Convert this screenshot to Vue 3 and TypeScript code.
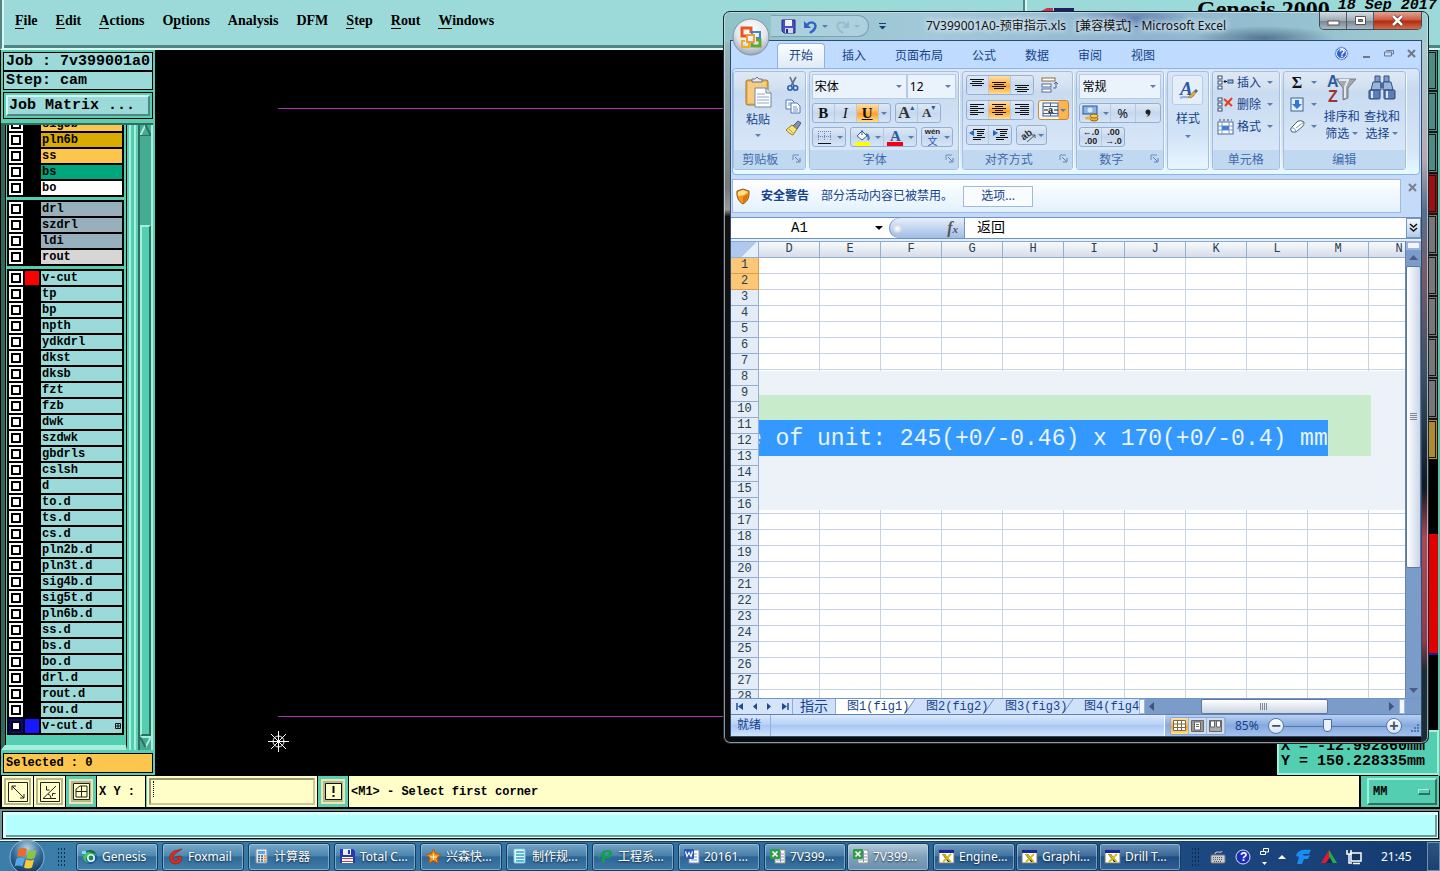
<script setup lang="ts">
import { ref } from 'vue'

interface Menu { pre: string; key: string; post: string }
interface Layer { name: string; tone: string; swatch?: string; active?: boolean }
interface Task { label: string; icon: string; lit?: boolean }

const menus: Menu[] = [
  { pre: '', key: 'F', post: 'ile' },
  { pre: '', key: 'E', post: 'dit' },
  { pre: '', key: 'A', post: 'ctions' },
  { pre: 'O', key: 'p', post: 'tions' },
  { pre: 'Analysis', key: '', post: '' },
  { pre: 'DFM', key: '', post: '' },
  { pre: '', key: 'S', post: 'tep' },
  { pre: '', key: 'R', post: 'out' },
  { pre: '', key: 'W', post: 'indows' },
]

const plain = (names: string): Layer[] => names.split(' ').map((name) => ({ name, tone: 'cyan' }))

const groups: Layer[][] = [
  [
    { name: 'sig5b', tone: 'amber' },
    { name: 'pln6b', tone: 'gold' },
    { name: 'ss', tone: 'amber' },
    { name: 'bs', tone: 'green' },
    { name: 'bo', tone: 'white' },
  ],
  [
    { name: 'drl', tone: 'slate' },
    { name: 'szdrl', tone: 'slate' },
    { name: 'ldi', tone: 'slate' },
    { name: 'rout', tone: 'silver' },
  ],
  [
    { name: 'v-cut', tone: 'cyan', swatch: 'red' },
    ...plain('tp bp npth ydkdrl dkst dksb fzt fzb dwk szdwk gbdrls cslsh d to.d ts.d cs.d pln2b.d pln3t.d sig4b.d sig5t.d pln6b.d ss.d bs.d bo.d drl.d rout.d rou.d'),
    { name: 'v-cut.d', tone: 'cyan', swatch: 'blue', active: true },
  ],
]

const sideTools = ['teal', 'teal', 'teal', 'red', 'grey', 'grey', 'grey', 'grey', 'grey', 'gold']

const ribbonTabs = ['开始', '插入', '页面布局', '公式', '数据', '审阅', '视图']
const columns = 'DEFGHIJKLMN'.split('')
const rowCount = 28
const sheets = ['图1(fig1)', '图2(fig2)', '图3(fig3)', '图4(fig4)']
const zoom = ref(50)
const units = ref('MM')
const fontName = ref('宋体')
const fontSize = ref('12')
const numberFormat = ref('常规')
const cellRef = ref('A1')
const formula = ref('返回')
const coords = ref('')

const taskGroups: Task[][] = [
  [{ label: 'Genesis', icon: 'genesis' }],
  [{ label: 'Foxmail', icon: 'foxmail' }],
  [{ label: '计算器', icon: 'calc' }],
  [{ label: 'Total C...', icon: 'floppy' }],
  [{ label: '兴森快...', icon: 'star' }],
  [{ label: '制作规...', icon: 'book' }],
  [{ label: '工程系...', icon: 'pflag' }],
  [{ label: '20161...', icon: 'word' }],
  [{ label: '7V399...', icon: 'excel' }, { label: '7V399...', icon: 'excel', lit: true }],
  [{ label: 'Engine...', icon: 'xwin' }, { label: 'Graphi...', icon: 'xwin' }, { label: 'Drill T...', icon: 'xwin' }],
]

const bars = (rows: [number, number, number][]): string =>
  rows.map(([x, y, w]) => `<rect x="${x}" y="${y}" width="${w}" height="1" fill="#111"/>`).join('')

const icons: Record<string, string> = {
  genesis: '<circle cx="9" cy="9" r="7" fill="#1d4f9c"/><path d="M2 8C5 2 13 2 16 8C12 5 8 6 6 9C4 12 6 14 9 15C4 15 2 12 2 8Z" fill="#3fc45c"/><circle cx="10" cy="10" r="4" fill="#e8f4ff"/><circle cx="10" cy="10" r="2.400" fill="#158a4a"/><path d="M1 3h4v3h-4z" fill="#7ce0f2"/><path d="M8 3l6 2" stroke="#173" stroke-width="2"/>',
  foxmail: '<path d="M15 1L7 3C1 6 1 15 8 16C14 16 16 11 14 8L8 9L12 11C11 14 6 13 6 10C6 6 10 5 15 1Z" fill="#d92f1f" stroke="#8e160d" stroke-width=".6"/>',
  calc: '<rect x="3" y="1" width="11" height="14" rx="1" fill="#dfe9f3" stroke="#7e96b0"/><rect x="5" y="3" width="7" height="3" fill="#5aa9e6"/><path d="M5 8h2M8 8h2M5 10.500h2M8 10.500h2M5 13h2M8 13h2" stroke="#456" stroke-width="1.400"/><path d="M11 8h2M11 10.500h2M11 13h2" stroke="#e08a2c" stroke-width="1.400"/>',
  floppy: '<path d="M1 1h13l2 2v12H1z" fill="#2438b8"/><rect x="4" y="1" width="8" height="6" fill="#e8eefc"/><rect x="9" y="2" width="2" height="4" fill="#2438b8"/><rect x="3" y="9" width="11" height="6" fill="#fff"/><path d="M3 10.500h11M3 13.500h11" stroke="#d63a3a"/>',
  star: '<path d="M8.500 1l2.200 4.900 5.300.5-4 3.600 1.200 5.300-4.700-2.800-4.700 2.800 1.200-5.300-4-3.600 5.300-.5z" fill="#f7941d" stroke="#b65a08"/><path d="M5 9h7M8.500 6v6" stroke="#fff3c0"/>',
  book: '<rect x="3" y="1" width="11" height="14" rx="1" fill="#eafaff" stroke="#7bc8e0"/><path d="M5 4h8M5 7h8M5 10h8M5 13h8" stroke="#2aa3c8" stroke-width="1.500"/>',
  pflag: '<path fill-rule="evenodd" d="M5 16L5 4C8 1 16 1 15 6C15 10 11 11 8 10V13ZM8 5v3c2 1 4-1 4-3s-3-1-4 0z" fill="#14a04a"/><path d="M1 9l4-5v3l-3 4z" fill="#2f8f70"/>',
  word: '<rect x="6" y="2" width="10" height="13" fill="#fff" stroke="#7a8cb8"/><path d="M8 6h6M8 9h6M8 12h6" stroke="#6d8ed0"/><rect x="1" y="1" width="10" height="10" rx="1" fill="#2b57b5"/><path d="M2.500 3.500l1.500 5 2-4 2 4 1.500-5" fill="none" stroke="#fff" stroke-width="1.200"/>',
  excel: '<rect x="6" y="2" width="10" height="13" fill="#fff" stroke="#8a9a8a"/><path d="M7 6h8M7 9h8M7 12h8M11.500 3v11" stroke="#8c8fb8"/><rect x="1" y="1" width="10" height="10" rx="1" fill="#2e9e44"/><path d="M3.500 3.500l5 5M8.500 3.500l-5 5" stroke="#fff" stroke-width="1.700"/>',
  xwin: '<rect x="1" y="2" width="15" height="13" fill="#fff" stroke="#777"/><rect x="1" y="2" width="15" height="3" fill="#122a9c"/><path d="M4 6h3l6 8h-3z" fill="#111"/><path d="M13 6L5 14M5 6l8 8" stroke="#d3bd10" stroke-width="1.800"/>',
  paste: '<rect x="2" y="4" width="22" height="25" rx="2" fill="#eab75f" stroke="#a0762c"/><rect x="4" y="6" width="18" height="21" fill="#f4cd83"/><path d="M8 6V3h3l2-2 2 2h3v3z" fill="#e6e9ee" stroke="#6d7580"/><path d="M11 12h11l5 5v14H11z" fill="#fff" stroke="#6e86ac"/><path d="M22 12v5h5" fill="#dbe6f5" stroke="#6e86ac"/><path d="M13 18h8M13 21h12M13 24h12M13 27h12" stroke="#8ea7cc"/>',
  cut: '<path d="M5 1l4 9M11 1L6 10" stroke="#5e6f8f" stroke-width="1.600"/><circle cx="5" cy="12" r="2.200" fill="none" stroke="#2c5fb3" stroke-width="1.600"/><circle cx="10.500" cy="12" r="2.200" fill="none" stroke="#2c5fb3" stroke-width="1.600"/>',
  copy: '<path d="M1 2h6l2 2v7H1z" fill="#fff" stroke="#4f76b6"/><path d="M6 5h6l3 3v7H6z" fill="#fff" stroke="#4f76b6"/><path d="M3 5h4M3 7h3M8 9h4M8 11h5M8 13h5" stroke="#6f92c8"/>',
  brush: '<path d="M13 1l3 2-4 6-4-3z" fill="#8793ab" stroke="#4b5870"/><path d="M7 5l5 4-4 6c-3-1-5-3-7-5z" fill="#f9e27a" stroke="#9a7a1e"/><path d="M4 9l4 4" stroke="#c9a438"/>',
  grid: '<path d="M2.500 2v10M8.500 2v10M14.500 2v10M2 2.500h13M2 7.500h13" stroke="#7588a8" stroke-dasharray="1 1"/><path d="M2 14.500h13" stroke="#111"/>',
  bucket: '<path d="M3 7l5-5 5 5-5 4z" fill="#f4f8ff" stroke="#3d5d94"/><path d="M8 1v5" stroke="#3d5d94"/><path d="M12 5c3 1 3 4 2 6" stroke="#3a74c4" stroke-width="2" fill="none"/><rect x="1" y="13" width="15" height="4" fill="#ff0"/>',
  fontcolor: '<text x="3" y="12" font-family="Liberation Serif" font-weight="bold" font-size="15" fill="#2c5a9e">A</text><rect x="0" y="13" width="16" height="4" fill="#f00010"/>',
  alignTop: bars([[1, 2, 14], [3, 4, 10], [1, 6, 14], [3, 8, 10]]),
  alignMid: bars([[1, 5, 14], [3, 7, 10], [1, 9, 14], [3, 11, 10]]),
  alignBot: bars([[1, 8, 14], [3, 10, 10], [1, 12, 14], [3, 14, 10]]),
  left: bars([[1, 2, 14], [1, 4, 8], [1, 6, 14], [1, 8, 8], [1, 10, 14], [1, 12, 8]]),
  center: bars([[1, 2, 14], [4, 4, 8], [1, 6, 14], [4, 8, 8], [1, 10, 14], [4, 12, 8]]),
  right: bars([[1, 2, 14], [6, 4, 9], [1, 6, 14], [6, 8, 9], [1, 10, 14], [6, 12, 9]]),
  outdent: bars([[4, 2, 12], [8, 4, 7], [8, 6, 7], [8, 8, 5], [4, 10, 12], [4, 12, 8]]) + '<path d="M5 3v6L0 6z" fill="#2b63b8"/>',
  indent: bars([[4, 2, 12], [8, 4, 7], [8, 6, 7], [8, 8, 5], [4, 10, 12], [4, 12, 8]]) + '<path d="M1 3v6l5-3z" fill="#2b63b8"/>',
  wrap: '<rect x="1" y="1" width="13" height="3" fill="#fff" stroke="#8a6d3a"/><rect x="1" y="7" width="9" height="3" fill="#fff" stroke="#556d94"/><rect x="1" y="12" width="9" height="3" fill="#fff" stroke="#556d94"/><path d="M12 11h3V6M13 7l2-2 2 2" stroke="#4066a0" fill="none"/>',
  merge: '<rect x="1" y="1" width="15" height="13" fill="#f4f8fd" stroke="#3d5f94"/><path d="M1 4.500h15M1 11.500h15M8.500 1v3M8.500 12v2" stroke="#3d5f94"/><text x="6" y="11" font-family="Liberation Sans" font-weight="bold" font-size="9" fill="#111">a</text><path d="M2 8h4M12 8h4" stroke="#111"/>',
  orient: '<text x="1" y="12" transform="rotate(-35 5 9)" font-family="Liberation Sans" font-size="10" font-weight="bold" fill="#333">ab</text><path d="M7 15L15 8M12 8h3v3" stroke="#555" fill="none"/>',
  money: '<rect x="1" y="1" width="14" height="8" fill="#8ab3e3" stroke="#2a5694"/><circle cx="8" cy="5" r="2.500" fill="#d7e8fb"/><ellipse cx="12" cy="14" rx="4" ry="2" fill="#e9b23a" stroke="#96660c"/><ellipse cx="12" cy="11" rx="4" ry="2" fill="#f7cf5e" stroke="#96660c"/><ellipse cx="6" cy="13" rx="3" ry="1.500" fill="#e9b23a"/>',
  styleA: '<text x="4" y="17" font-family="Liberation Serif" font-style="italic" font-weight="bold" font-size="19" fill="#2c5a9e">A</text><path d="M4 20C10 17 12 22 18 17" stroke="#8fb0df" stroke-width="2" fill="none"/><path d="M12 19l6-6 2 2-5 5z" fill="#e5a83c" stroke="#8b6420" stroke-width=".5"/><path d="M18 13l2-2 2 2-2 2z" fill="#55677f"/>',
  insert: '<rect x="1" y="1" width="4" height="3" fill="#fff" stroke="#334d78"/><rect x="1" y="6" width="4" height="3" fill="#fff" stroke="#334d78"/><rect x="1" y="11" width="4" height="3" fill="#fff" stroke="#334d78"/><rect x="11" y="5" width="5" height="3" fill="#9cc0ee" stroke="#334d78"/><path d="M7 6.500h3M8.500 5L7 6.500 8.500 8" stroke="#111" fill="none"/>',
  remove: '<rect x="1" y="1" width="4" height="3" fill="#fff" stroke="#334d78"/><rect x="1" y="6" width="4" height="3" fill="#fff" stroke="#334d78"/><rect x="1" y="11" width="4" height="3" fill="#fff" stroke="#334d78"/><path d="M7 2l8 7M15 1L8 9" stroke="#ec3b24" stroke-width="2"/>',
  format: '<rect x="1" y="3" width="15" height="12" fill="#fff" stroke="#4b6a9c"/><path d="M1 7h15M1 11h15M5 3v12M12 3v12" stroke="#7a97c4"/><rect x="5" y="7" width="7" height="4" fill="#3f7ee0"/><path d="M2 1h13" stroke="#334d78" stroke-dasharray="2 2"/>',
  fill: '<rect x="1" y="1" width="12" height="13" fill="#e5effc" stroke="#39629f"/><path d="M5 3h4v4h3l-5 5-5-5h3z" fill="#2f76e0"/>',
  erase: '<path d="M1 9L8 2q3-1 6 1q0 3-1 4L6 13H2Q0 11 1 9z" fill="#fff" stroke="#4d607f"/><path d="M1 9q4-1 5 4M6 9l8-6" stroke="#8494ac" fill="none"/>',
  sort: '<text x="0" y="13" font-family="Liberation Sans" font-size="16" font-weight="bold" fill="#2d5c9e">A</text><text x="1" y="28" font-family="Liberation Sans" font-size="16" font-weight="bold" fill="#9c3434">Z</text><path d="M9 5h20l-8 9v10l-5 2V14z" fill="#a2a6ad" stroke="#777d86"/><path d="M12 6h9l-3 7v11" stroke="#e4e7eb" stroke-width="2" fill="none"/>',
  find: '<path d="M7 2h5v6H7zM16 2h5v6h-5z" fill="#7f9cc8" stroke="#33507f"/><path d="M5 8h8v8H3zM15 8h8l2 8H15z" fill="#9ab4dc" stroke="#33507f"/><rect x="12" y="9" width="4" height="5" fill="#4a689c"/><rect x="1" y="16" width="11" height="9" rx="1" fill="#5b7db8" stroke="#2c4775"/><rect x="16" y="16" width="11" height="9" rx="1" fill="#5b7db8" stroke="#2c4775"/><path d="M4 17v7M19 17v7" stroke="#dce8fa" stroke-width="2"/>',
  launcher: '<path d="M1 6V1h6" stroke="#6a8dbc" fill="none"/><path d="M3 3l4 4M8 4v4H4" stroke="#5d7fae" fill="none"/>',
  save: '<path d="M1 1h13v13H3l-2-2z" fill="#4b4fc4" stroke="#26297f"/><rect x="4" y="1" width="7" height="6" fill="#eef2fb"/><rect x="4" y="9" width="8" height="5" fill="#cfd6ee"/><rect x="5" y="10" width="2" height="4" fill="#26297f"/>',
  undo: '<path d="M4 6C8 1 14 4 12 9C11 12 8 13 7 14" stroke="#2f62c4" stroke-width="2.400" fill="none"/><path d="M1 2v7h7z" fill="#2f62c4"/>',
  redo: '<path d="M11 6C7 1 1 4 3 9C4 12 7 13 8 14" stroke="#9db9cf" stroke-width="2" fill="none"/><path d="M14 2v7H7z" fill="#9db9cf"/>',
}
</script>

<template>
  <div class="page">
    <header class="menubar">
      <nav class="menus">
        <button v-for="m in menus" :key="m.pre + m.key + m.post" class="menu" type="button">{{ m.pre }}<u v-if="m.key">{{ m.key }}</u>{{ m.post }}</button>
      </nav>
      <div class="brand">
        <svg class="mark" width="36" height="12" viewBox="0 0 36 12"><path d="M0 12L8 8h6v4z" fill="#d0304a" /><rect x="15" y="8" width="20" height="4" fill="#1b1f66" /></svg>
        <strong class="product">Genesis 2000</strong>
        <em class="date">18 Sep 2017</em>
      </div>
    </header>

    <main class="desk">
      <aside class="panel">
        <div class="field">Job : 7v399001a0</div>
        <div class="field">Step: cam</div>
        <div class="matrix"><button type="button">Job Matrix ...</button></div>
        <div class="lists">
          <div class="layers">
            <ul v-for="(g, gi) in groups" :key="gi" class="group">
              <li v-for="l in g" :key="l.name" class="layer">
                <input type="checkbox" :class="{ current: l.active }" :aria-label="'Display ' + l.name">
                <span class="swatch" :class="l.swatch"></span>
                <button type="button" class="name" :class="l.tone">{{ l.name }}<svg v-if="l.active" width="6" height="6" viewBox="0 0 6 6"><path d="M.5 .5h5v5h-5zM3 0v6M0 3h6" fill="none" stroke="#111" /></svg></button>
              </li>
            </ul>
          </div>
          <div class="ridge"></div>
          <div class="vbar">
            <svg width="11" height="11" viewBox="0 0 11 11"><path d="M5.500 0L0 11" stroke="#a4f0dc" stroke-width="2" /><path d="M5.500 0L11 11H0" fill="none" stroke="#2f6e61" stroke-width="2" /></svg>
            <div class="gap"></div>
            <div class="grip"></div>
            <svg width="11" height="14" viewBox="0 0 11 14"><path d="M0 1H11L5.500 11" fill="none" stroke="#a4f0dc" stroke-width="2" /><path d="M0 1L5.500 11" stroke="#2f6e61" stroke-width="2" /></svg>
          </div>
        </div>
        <div class="selected">Selected : 0</div>
      </aside>

      <div class="canvas">
        <svg class="drawing" width="100%" height="100%">
          <path d="M123 58.500H1100M123 666.500H1100" stroke="#ac38b0" />
          <g stroke="#fff" fill="none"><circle cx="123.500" cy="691.500" r="5.500" /><path d="M113 691.500h21M123.500 681v21M116 684l15 15M131 684l-15 15" /></g>
        </svg>
      </div>
      <div class="sidetools">
        <button v-for="(t, i) in sideTools" :key="i" type="button" :class="t" :aria-label="'Tool ' + (i + 1)"></button>
        <div class="void"></div>
        <div class="alert"></div>
      </div>
      <div class="readout"><div>X = -12.992860mm</div><div>Y = 150.228335mm</div></div>
    </main>

    <section class="command">
      <button type="button" class="tool" aria-label="Snap to line"><svg width="20" height="20" viewBox="0 0 20 20"><path d="M.5 .5h19v19H.5zM4 4l12 12M4 8V4h4M16 12v4h-4" fill="none" stroke="#222" /></svg></button>
      <button type="button" class="tool" aria-label="Angle"><svg width="20" height="20" viewBox="0 0 20 20"><path d="M.5 .5h19v19H.5zM3 16.500L16 4M3 16.500h13M6.500 4v4h3M8 12q3 1 3 4M12.500 14v-2.500h3" fill="none" stroke="#222" /></svg></button>
      <button type="button" class="tool on" aria-label="Grid"><svg width="17" height="17" viewBox="0 0 17 17"><path d="M.5 .5h16v16H.5zM3 14V6l4-3h7v11zM8.500 3v11M3 8.500h11" fill="none" stroke="#222" /></svg></button>
      <label class="xy" for="xy">X Y :</label>
      <div class="entry"><input id="xy" v-model="coords" type="text"><i class="caret"></i></div>
      <button type="button" class="tool on" aria-label="Attention"><svg width="17" height="17" viewBox="0 0 17 17"><path d="M.5 .5h16v16H.5z" fill="none" stroke="#111" /><path d="M8.500 3v7M8.500 12v2" stroke="#111" stroke-width="2" /></svg></button>
      <p class="message">&lt;M1&gt; - Select first corner</p>
      <div class="units"><select v-model="units" aria-label="Units"><option>MM</option><option>INCH</option></select><i></i></div>
    </section>
    <div class="status"><div></div></div>

    <footer class="taskbar">
      <button type="button" class="start" aria-label="Start">
        <svg width="38" height="32" viewBox="0 0 38 32">
          <defs><radialGradient id="orb" cx=".5" cy=".25" r=".8"><stop offset="0" stop-color="#b4d3e3" /><stop offset=".5" stop-color="#366f9c" /><stop offset="1" stop-color="#0d2c50" /></radialGradient></defs>
          <circle cx="19" cy="17" r="17" fill="url(#orb)" stroke="#8ab9d4" />
          <path d="M11 9q4-2 8 0l-2 8q-4-2-8 0z" fill="#ec6a2c" /><path d="M20.500 10q4 2 8 0l-2 8q-4 2-8 0z" fill="#8cc63e" /><path d="M8.500 18.500q4-2 8 0l-2 8q-4-2-8 0z" fill="#54a8e4" /><path d="M18 19.500q4 2 8 0l-2 8q-4 2-8 0z" fill="#fcca38" />
        </svg>
      </button>
      <span class="dots"></span>
      <div class="tasks">
        <div v-for="(g, gi) in taskGroups" :key="gi" class="taskgroup">
          <button v-for="(t, ti) in g" :key="ti" type="button" class="task" :class="{ lit: t.lit }"><svg width="17" height="17" viewBox="0 0 17 17" v-html="icons[t.icon]"></svg><span>{{ t.label }}</span></button>
        </div>
      </div>
      <div class="tray">
        <span class="dots"></span>
        <svg width="16" height="14" viewBox="0 0 16 14"><path d="M5 4C5 0 12 4 12 1" stroke="#ddd" fill="none" /><rect x="1" y="5" width="14" height="8" rx="1" fill="#c8ccd0" stroke="#777" /><path d="M3 7.500h10M3 9.500h10M4 11.500h8" stroke="#555" stroke-dasharray="1 1" /></svg>
        <svg width="16" height="16" viewBox="0 0 16 16"><circle cx="8" cy="8" r="7" fill="#1a2cb8" stroke="#dde" /><text x="5" y="12" font-family="Liberation Sans" font-weight="bold" font-size="12" fill="#fff">?</text></svg>
        <svg width="9" height="18" viewBox="0 0 9 18"><path d="M3.500 3V.500h5V4H6M.5 3.500h5v3h-5z" fill="none" stroke="#fff" /><path d="M2 14h5l-2.500 3z" fill="#fff" /></svg>
        <svg width="8" height="5" viewBox="0 0 8 5"><path d="M0 5l4-4 4 4z" fill="#fff" /></svg>
        <svg width="17" height="16" viewBox="0 0 17 16"><path d="M1 7C2 1 8 0 16 1L14 5H9C7 5 8 8 15 6L13 10H9L7 15H2L4 8z" fill="#1c8cf0" /></svg>
        <svg width="16" height="15" viewBox="0 0 16 15"><path d="M8 1L0 14h5l4-6z" fill="#e8182c" /><path d="M8 1l8 13h-4L8 7z" fill="#20b048" /><path d="M5 14l4-5 2 5z" fill="#0c2c54" /></svg>
        <svg width="16" height="16" viewBox="0 0 16 16"><rect x="5" y="4" width="10" height="8" fill="#17365f" stroke="#fff" stroke-width="1.500" /><path d="M7 14.500h7M1 1v4h4V1M3 5v9h3" stroke="#fff" stroke-width="1.500" fill="none" /></svg>
        <time>21:45</time>
        <button type="button" class="peek" aria-label="Show desktop"></button>
      </div>
    </footer>

    <section class="excel">
      <div class="titlebar">
        <div class="quick">
          <button type="button" aria-label="Save"><svg width="15" height="15" viewBox="0 0 15 15" v-html="icons.save"></svg></button>
          <button type="button" aria-label="Undo"><svg width="15" height="15" viewBox="0 0 15 15" v-html="icons.undo"></svg><i class="car"></i></button>
          <button type="button" aria-label="Redo"><svg width="15" height="15" viewBox="0 0 15 15" v-html="icons.redo"></svg><i class="car pale"></i></button>
        </div>
        <svg class="more" width="7" height="7" viewBox="0 0 7 7"><path d="M0 .5h7" stroke="#1f3c70" /><path d="M0 3h7L3.500 6.500z" fill="#1f3c70" /></svg>
        <h1>7V399001A0-预审指示.xls&nbsp;&nbsp; [兼容模式] - Microsoft Excel</h1>
        <div class="winbtns">
          <button type="button" aria-label="Minimize"><svg width="13" height="12" viewBox="0 0 13 12"><rect x="1" y="6" width="11" height="4" fill="#fff" stroke="#555" /></svg></button>
          <button type="button" aria-label="Maximize"><svg width="13" height="12" viewBox="0 0 13 12"><path d="M1.500 1.500h10v8h-10z" fill="#fff" stroke="#555" /><path d="M4.500 4.500h4v2h-4z" fill="#889" stroke="#555" /></svg></button>
          <button type="button" class="close" aria-label="Close"><svg width="13" height="12" viewBox="0 0 13 12"><path d="M2 1l9 9M11 1l-9 9" stroke="#5a2a26" stroke-width="4" /><path d="M2 1l9 9M11 1l-9 9" stroke="#fff" stroke-width="2.500" /></svg></button>
        </div>
      </div>
      <button type="button" class="office" aria-label="Office">
        <svg width="38" height="38" viewBox="0 0 38 38">
          <defs><radialGradient id="pearl" cx=".5" cy=".3" r=".7"><stop offset="0" stop-color="#fff" /><stop offset=".6" stop-color="#e3e6ec" /><stop offset="1" stop-color="#9aa8b8" /></radialGradient></defs>
          <circle cx="19" cy="19" r="18" fill="url(#pearl)" stroke="#7f93a4" />
          <g fill="none"><path d="M14 18h-4v-8h9v5" stroke="#e8561c" stroke-width="3" /><path d="M20 17v-3h8v6h-4" stroke="#3d86d0" stroke-width="2" /><path d="M17 23v6h-7v-6h3" stroke="#f4ae1c" stroke-width="2" /><path d="M24 22h4v6h-8v-4" stroke="#63a82c" stroke-width="3" /><path d="M15 17h7v7h-7z" stroke="#f09a3c" stroke-width="2" /></g>
        </svg>
      </button>
      <div class="client">
        <div class="tabrow">
          <button v-for="(t, i) in ribbonTabs" :key="t" type="button" class="rtab" :class="{ on: i === 0 }">{{ t }}</button>
          <div class="mdi">
            <svg width="15" height="15" viewBox="0 0 15 15"><circle cx="7.500" cy="7.500" r="6.500" fill="#2d62d0" stroke="#9cb7e4" /><circle cx="7.500" cy="7.500" r="5" fill="none" stroke="#fff" /><text x="5" y="11" font-family="Liberation Sans" font-size="10" font-weight="bold" fill="#fff">?</text></svg>
            <svg width="9" height="9" viewBox="0 0 9 9"><path d="M1 8h7" stroke="#6e7886" stroke-width="2" /></svg>
            <svg width="10" height="9" viewBox="0 0 10 9"><path d="M2.500 2V1.500h7V5H8M.5 3h7v4h-7z" fill="none" stroke="#6e7886" /></svg>
            <svg width="9" height="9" viewBox="0 0 9 9"><path d="M1 1l7 7M8 1L1 8" stroke="#6e7886" stroke-width="2" /></svg>
          </div>
        </div>

        <div class="ribbon">
          <div class="rg clip">
            <div class="body">
              <button type="button" class="big"><svg width="29" height="33" viewBox="0 0 29 33" v-html="icons.paste"></svg><span>粘贴</span><i class="car"></i></button>
              <div class="stack">
                <button v-for="n in ['cut', 'copy', 'brush']" :key="n" type="button" :aria-label="n"><svg width="16" height="16" viewBox="0 0 16 16" v-html="icons[n]"></svg></button>
              </div>
            </div>
            <div class="cap">剪贴板<svg width="9" height="9" viewBox="0 0 9 9" v-html="icons.launcher"></svg></div>
          </div>
          <div class="rg font">
            <div class="body rows">
              <div class="line tall">
                <label class="combo wide"><select v-model="fontName" aria-label="Font"><option>宋体</option></select><i class="car"></i></label>
                <label class="combo size"><select v-model="fontSize" aria-label="Font size"><option>12</option></select><i class="car"></i></label>
              </div>
              <div class="line">
                <div class="btns"><button type="button" class="serif"><b>B</b></button><button type="button" class="serif"><i class="ital">I</i></button><button type="button" class="serif hot"><b><u>U</u></b></button><button type="button" class="thin" aria-label="Underline style"><i class="car"></i></button></div>
                <div class="btns"><button type="button" class="serif grow">A<sup>▴</sup></button><button type="button" class="serif shrink">A<sup>▾</sup></button></div>
              </div>
              <div class="line">
                <div class="btns"><button type="button" class="drop" aria-label="Borders"><svg width="17" height="17" viewBox="0 0 17 17" v-html="icons.grid"></svg><i class="car"></i></button></div>
                <div class="btns"><button type="button" class="drop" aria-label="Fill colour"><svg width="17" height="17" viewBox="0 0 17 17" v-html="icons.bucket"></svg><i class="car"></i></button><button type="button" class="drop" aria-label="Font colour"><svg width="17" height="17" viewBox="0 0 17 17" v-html="icons.fontcolor"></svg><i class="car"></i></button></div>
                <div class="btns"><button type="button" class="drop"><span class="wen"><small>wén</small><span>文</span></span><i class="car"></i></button></div>
              </div>
            </div>
            <div class="cap">字体<svg width="9" height="9" viewBox="0 0 9 9" v-html="icons.launcher"></svg></div>
          </div>
          <div class="rg align">
            <div class="body rows even">
              <div class="line">
                <div class="btns"><button v-for="n in ['alignTop', 'alignMid', 'alignBot']" :key="n" type="button" :class="{ hot: n === 'alignMid' }" :aria-label="n"><svg width="16" height="16" viewBox="0 0 16 16" v-html="icons[n]"></svg></button></div>
                <button type="button" class="bare" aria-label="Wrap text"><svg width="17" height="16" viewBox="0 0 17 16" v-html="icons.wrap"></svg></button>
              </div>
              <div class="line">
                <div class="btns"><button v-for="n in ['left', 'center', 'right']" :key="n" type="button" :class="{ hot: n === 'center' }" :aria-label="n"><svg width="16" height="16" viewBox="0 0 16 16" v-html="icons[n]"></svg></button></div>
                <div class="btns gold"><button type="button" class="drop tight" aria-label="Merge"><svg width="17" height="16" viewBox="0 0 17 16" v-html="icons.merge"></svg><i class="car"></i></button></div>
              </div>
              <div class="line">
                <div class="btns"><button v-for="n in ['outdent', 'indent']" :key="n" type="button" :aria-label="n"><svg width="16" height="16" viewBox="0 0 16 16" v-html="icons[n]"></svg></button></div>
                <div class="btns"><button type="button" class="drop tight" aria-label="Orientation"><svg width="17" height="16" viewBox="0 0 17 16" v-html="icons.orient"></svg><i class="car"></i></button></div>
              </div>
            </div>
            <div class="cap">对齐方式<svg width="9" height="9" viewBox="0 0 9 9" v-html="icons.launcher"></svg></div>
          </div>
          <div class="rg num">
            <div class="body rows">
              <div class="line tall"><label class="combo full"><select v-model="numberFormat" aria-label="Number format"><option>常规</option></select><i class="car"></i></label></div>
              <div class="line"><div class="btns full"><button type="button" class="drop" aria-label="Currency"><svg width="17" height="17" viewBox="0 0 17 17" v-html="icons.money"></svg><i class="car"></i></button><button type="button" class="glyph">%</button><button type="button" class="glyph comma" aria-label="Comma style"><svg width="6" height="9" viewBox="0 0 6 9"><circle cx="3" cy="3" r="2.500" fill="#222" /><path d="M5 3q1 4-4 5q3-2 2-4z" fill="#222" /></svg></button></div></div>
              <div class="line"><div class="btns"><button type="button" class="dec"><span>←.0</span><span>.00</span></button><button type="button" class="dec"><span>.00</span><span>→.0</span></button></div></div>
            </div>
            <div class="cap">数字<svg width="9" height="9" viewBox="0 0 9 9" v-html="icons.launcher"></svg></div>
          </div>
          <button type="button" class="rg style"><span class="tile"><svg width="24" height="24" viewBox="0 0 24 24" v-html="icons.styleA"></svg></span><span>样式</span><i class="car"></i></button>
          <div class="rg cell">
            <div class="body list">
              <button type="button"><svg width="17" height="16" viewBox="0 0 17 16" v-html="icons.insert"></svg>插入<i class="car"></i></button>
              <button type="button"><svg width="17" height="16" viewBox="0 0 17 16" v-html="icons.remove"></svg>删除<i class="car"></i></button>
              <button type="button"><svg width="17" height="16" viewBox="0 0 17 16" v-html="icons.format"></svg>格式<i class="car"></i></button>
            </div>
            <div class="cap">单元格</div>
          </div>
          <div class="rg edit">
            <div class="body">
              <div class="list">
                <button type="button"><span class="sigma">Σ</span><i class="car"></i></button>
                <button type="button" aria-label="Fill"><svg width="15" height="15" viewBox="0 0 15 15" v-html="icons.fill"></svg><i class="car"></i></button>
                <button type="button" aria-label="Clear"><svg width="15" height="15" viewBox="0 0 15 15" v-html="icons.erase"></svg><i class="car"></i></button>
              </div>
              <button type="button" class="big"><svg width="30" height="30" viewBox="0 0 30 30" v-html="icons.sort"></svg><span>排序和</span><span>筛选<i class="car"></i></span></button>
              <button type="button" class="big"><svg width="28" height="30" viewBox="0 0 28 30" v-html="icons.find"></svg><span>查找和</span><span>选择<i class="car"></i></span></button>
            </div>
            <div class="cap">编辑</div>
          </div>
        </div>

        <div class="warnrow">
          <div class="warn">
            <svg width="14" height="17" viewBox="0 0 14 17"><path d="M7 1L13 3C13.500 9 12 13 7 16C2 13 .5 9 1 3Z" fill="#f79a1c" stroke="#8a5a28" /><path d="M7 2L12 4L8 7L2 8V4Z" fill="#fde08a" /><path d="M7 9l5-3c0 4-2 7-5 9z" fill="#e2700e" /></svg>
            <strong>安全警告</strong><span>部分活动内容已被禁用。</span><button type="button">选项...</button>
          </div>
          <svg class="x" width="9" height="9" viewBox="0 0 9 9"><path d="M1 1l7 7M8 1L1 8" stroke="#7a7f88" stroke-width="2" /></svg>
        </div>

        <div class="formula">
          <input v-model="cellRef" class="ref" aria-label="Name box" type="text"><i class="car black"></i>
          <div class="fx"><i class="knob"></i><span>f<small>x</small></span></div>
          <input v-model="formula" class="fin" aria-label="Formula" type="text">
          <button type="button" aria-label="Expand"><svg width="9" height="10" viewBox="0 0 9 10"><path d="M1 1l3.500 3L8 1M1 5l3.500 3L8 5" fill="none" stroke="#111" stroke-width="1.500" /></svg></button>
        </div>

        <div class="sheet">
          <div class="cells">
            <table>
              <thead><tr><th class="corner"></th><th v-for="c in columns" :key="c">{{ c }}</th></tr></thead>
              <tbody><tr v-for="r in rowCount" :key="r"><th :class="{ sel: r < 3 }">{{ r }}</th><td v-for="c in columns" :key="c"></td></tr></tbody>
            </table>
            <div class="picture"><div class="box"><span>e of unit: 245(+0/-0.46) x 170(+0/-0.4) mm</span></div></div>
          </div>
          <div class="scroll">
            <i class="split"></i>
            <svg width="15" height="16" viewBox="0 0 15 16"><path d="M3 10l4.500-5 4.500 5z" fill="#4a5d84" /></svg>
            <div class="thumb"><i></i></div>
            <svg class="end" width="15" height="16" viewBox="0 0 15 16"><path d="M3 6l4.500 5L12 6z" fill="#4a5d84" /></svg>
          </div>
        </div>

        <div class="sheettabs">
          <div class="nav">
            <svg width="62" height="16" viewBox="0 0 62 16"><path d="M6 4v7M57 4v7" stroke="#1f4a8e" stroke-width="1.500" /><path d="M12 4v7L7 7.500zM26 4v7l-4-3.500zM36 4v7l4-3.500zM51 4v7l5-3.500z" fill="#1f4a8e" /></svg>
          </div>
          <button type="button" class="stab first">指示</button>
          <div class="strip">
            <button v-for="(s, i) in sheets" :key="s" type="button" class="stab" :class="{ on: i === 0 }"><svg width="12" height="16" viewBox="0 0 12 16"><path d="M0 0H12L3 13Q1 16 0 16Z" :fill="i === 0 ? '#fff' : '#cfe0fa'" /><path d="M12 0L3 13L0 16" fill="none" stroke="#6c90c8" /></svg><span>{{ s }}</span></button>
          </div>
          <i class="vsplit"></i>
          <div class="hscroll">
            <svg width="15" height="16" viewBox="0 0 15 16"><path d="M9 3v9L4 7.500z" fill="#3f547e" /></svg>
            <div class="hthumb"><i></i></div>
            <svg class="end" width="15" height="16" viewBox="0 0 15 16"><path d="M5 3v9l5-4.500z" fill="#3f547e" /></svg>
          </div>
          <i class="vsplit"></i>
        </div>

        <div class="bottom">
          <span class="ready">就绪</span>
          <div class="right">
            <div class="views">
              <button type="button" class="hot" aria-label="Normal"><svg width="13" height="11" viewBox="0 0 13 11"><path d="M.5 .5h12v10H.5zM.5 4h12M.5 7.500h12M4.500 0v11M8.500 0v11" fill="#fff" stroke="#7a6a48" /></svg></button>
              <button type="button" aria-label="Page layout"><svg width="13" height="12" viewBox="0 0 13 12"><path d="M.5 .5h12v11H.5z" fill="#999" stroke="#666" /><path d="M3.500 2h6v8h-6zM5 4.500h3M5 6.500h3" fill="#fff" stroke="#666" /></svg></button>
              <button type="button" aria-label="Page break"><svg width="13" height="12" viewBox="0 0 13 12"><path d="M.5 .5h12v11H.5z" fill="#aaa" stroke="#666" /><path d="M1.500 1h4v6h-4zM7.500 1h4v6h-4z" fill="#fff" stroke="#666" /></svg></button>
            </div>
            <output for="zoom">85%</output>
            <button type="button" class="round">−</button>
            <input id="zoom" v-model="zoom" type="range" min="0" max="120" aria-label="Zoom">
            <button type="button" class="round">+</button>
            <svg width="10" height="10" viewBox="0 0 10 10"><path d="M7 1h2M4 4h2M7 4h2M1 7h2M4 7h2M7 7h2" stroke="#5478b4" stroke-width="2" /></svg>
          </div>
        </div>
      </div>
    </section>
  </div>
</template>

<style>
html, body { background: #000; overflow: hidden; }
</style>

<style scoped>
* { box-sizing: border-box; }
button, input, select { font: inherit; color: inherit; margin: 0; padding: 0; border: 0; background: none; border-radius: 0; outline: 0; }
select { appearance: none; }
svg { display: block; flex: none; }
.page { position: relative; display: flex; flex-direction: column; height: 100vh; overflow: hidden; background: #000; color: #000; font: bold 12px/16px "Liberation Mono", monospace; }

.menubar { display: flex; justify-content: space-between; height: 50px; flex: none; background: #9bdad8; border-left: 2px solid #4f8583; border-bottom: 2px solid #d8f6f4; box-shadow: inset 2px 0 #d8f6f4, inset 0 -3px #4f8583; }
.menus { display: flex; gap: 18px; padding: 12px 0 0 13px; }
.menu { height: 17px; font: bold 14px/16px "Liberation Serif", serif; }
.menu u { text-decoration: none; border-bottom: 1px solid #000; }
.brand { display: flex; width: 417px; padding: 0 4px 0 14px; border-left: 2px solid #4f8583; box-shadow: inset 2px 0 #d8f6f4; }
.product { margin-left: 122px; font: bold 24px/18px "Liberation Serif", serif; white-space: nowrap; }
.date { margin-left: 8px; font: italic bold 15px/12px "Liberation Mono", monospace; white-space: nowrap; }

.desk { position: relative; flex: 1; min-height: 0; display: flex; }
.panel { display: flex; flex-direction: column; width: 155px; flex: none; padding: 2px 2px 2px 2px; background: #5bcdb0; border-left: 1px solid #000; margin-bottom: 1px; }
.field { height: 19px; border: 1px solid #000; background: #9bdad8; font-size: 15px; line-height: 18px; padding-left: 2px; white-space: nowrap; }
.matrix { margin-top: 2px; height: 27px; border: 1px solid #000; padding: 2px; background: #5bcdb0; }
.matrix button { display: block; width: 100%; height: 21px; background: #9bdad8; border: 2px solid; border-color: #cdf6f4 #4f8583 #4f8583 #cdf6f4; font-size: 15px; line-height: 17px; text-align: left; padding-left: 1px; }
.lists { flex: 1; min-height: 0; display: flex; margin: 4px 0 3px -2px; border-top: 2px solid #2f6e61; }
.layers { width: 126px; padding: 0 2px 10px 2px; border-left: 4px solid #33695b; box-shadow: inset 1px 0 #000; border-bottom: 5px solid #a4f0dc; border-right: 1px solid #000; display: flex; flex-direction: column; justify-content: flex-end; gap: 3px; overflow: hidden; background: #53ceb0; }
.group { margin: 0; padding: 2px; list-style: none; background: #000; display: grid; gap: 2px; width: 117px; flex: none; }
.layer { display: flex; gap: 2px; height: 14px; }
.layer input { appearance: none; width: 14px; height: 14px; background: #fff; border: 2px solid #fff; box-shadow: inset 0 0 0 2px #000; }
.layer input.current { border-color: #0a0a80; }
.swatch { width: 14px; }
.swatch.red { background: #f00; }
.swatch.blue { background: #1818ff; }
.name { flex: 1; display: flex; justify-content: space-between; align-items: center; line-height: 14px; text-align: left; padding: 0 1px; }
.cyan { background: #9bdad8; }
.amber { background: #fcc64e; }
.gold.name { background: #d9ab00; }
.green { background: #00a67c; }
.white { background: #fff; }
.slate { background: #98b0bc; }
.silver { background: #d6d6d6; }
.ridge { width: 7px; margin-left: 2px; border-left: 2px solid #a4f0dc; border-right: 2px solid #a4f0dc; background: #53ceb0; }
.vbar { width: 15px; margin-left: auto; border-left: 2px solid #2f6e61; border-right: 2px solid #a4f0dc; background: #45ab92; display: flex; flex-direction: column; }
.gap { flex: 18; }
.grip { flex: 102; border: 2px solid; border-color: #a4f0dc #2f6e61 #2f6e61 #a4f0dc; background: #53ceb0; }
.selected { height: 20px; border: 1px solid #000; background: #fcc64e; line-height: 18px; padding-left: 2px; }
.canvas { flex: 1; min-width: 0; background: #000; }
.drawing { width: 100%; height: 100%; }
.sidetools { width: 14px; flex: none; display: flex; flex-direction: column; border-right: 2px solid #5bbfa8; }
.sidetools button { height: 41px; border: 3px double #161616; background: #777; }
.sidetools .teal { background: #4c8c84; }
.sidetools .red { background: #9c1010; }
.sidetools .gold { background: #b08a30; }
.void { height: 74px; }
.alert { height: 121px; background: #e00000; border-bottom: 2px solid #1a1a9c; }
.readout { position: absolute; right: 1px; bottom: 1px; width: 162px; height: 45px; padding: 7px 0 0 2px; background: #53ceb0; border: 2px solid #a4f0dc; font-size: 15px; line-height: 15px; white-space: nowrap; }

.command { display: flex; height: 33px; flex: none; padding-left: 2px; background: #000; gap: 1px; border-bottom: 2px solid #000; }
.tool { width: 31px; display: grid; place-items: center; background: #fffec8; border: 2px solid #fffec8; box-shadow: inset 0 0 0 2px #b8b78c; }
.tool.on { width: 30px; border: 3px solid #5bcdb0; box-shadow: inset 0 0 0 2px #e9e8b4, inset 0 0 0 4px #b8b78c; }
.xy { width: 48px; padding-left: 2px; line-height: 33px; background: #fffec8; white-space: nowrap; }
.entry { position: relative; width: 171px; background: #fffec8; padding: 2px; border-left: 1px solid #5bcdb0; display: flex; }
.entry input { flex: 1; min-width: 0; border: 2px solid; border-color: #98976c #c9c898 #c9c898 #98976c; }
.caret { position: absolute; left: 6px; top: 5px; height: 16px; border-left: 1px dotted #000; }
.message { flex: 1; margin: 0; padding-left: 2px; line-height: 33px; background: #fffec8; }
.units { position: relative; width: 78px; margin-right: 1px; padding: 2px; background: #53ceb0; display: flex; margin-left: 1px; }
.units select { flex: 1; padding-left: 4px; margin-left: 4px; border: 2px solid; border-color: #a4f0dc #2f6e61 #2f6e61 #a4f0dc; background: #53ceb0; }
.units i { position: absolute; right: 9px; top: 13px; width: 12px; height: 6px; border: 1px solid; border-color: #a4f0dc #2f6e61 #2f6e61 #a4f0dc; border-bottom-width: 2px; }
.status { height: 32px; flex: none; background: #6f9494; padding: 2px 1px 1px 2px; border-bottom: 1px solid #dff; }
.status div { height: 28px; background: #b4fefe; border: 1px solid #000; box-shadow: inset 0 0 0 1px #d8ffff, inset 3px 3px #d8ffff, inset -3px -3px #6a9c9c; }

.taskbar { display: flex; align-items: center; height: 30px; flex: none; background: linear-gradient(90deg, #3c7eaa, #2f6b9c 60%, #1c4780 84%, #143a6e); border-top: 1px solid #1c3c5c; font: 12px/16px "Noto Sans", "Noto Sans CJK SC", sans-serif; color: #fff; }
.start { margin-left: 8px; width: 38px; height: 32px; margin-top: -2px; }
.dots { width: 9px; height: 20px; background: radial-gradient(circle, #0d2d4c 1px, transparent 1px) 0 0 / 3px 4px; flex: none; margin: 0 10px 0 11px; }
.tasks { display: flex; gap: 4px; flex: 1; min-width: 0; }
.taskgroup { display: flex; gap: 1px; }
.task { width: 82px; height: 28px; display: flex; align-items: center; gap: 4px; padding-left: 4px; white-space: nowrap; border: 1px solid #123c60; border-radius: 3px; box-shadow: inset 0 0 0 1px rgba(190, 222, 240, 0.5); background: linear-gradient(rgba(200, 225, 238, 0.45), rgba(120, 170, 200, 0.3) 45%, rgba(30, 80, 130, 0.35) 50%, rgba(90, 140, 180, 0.3)); text-shadow: 0 1px 2px #123; }
.task.lit { background: linear-gradient(#b5cbdb, #7f9fba 50%, #6b90b0); }
.tray { display: flex; align-items: center; gap: 9px; height: 100%; }
.tray .dots { margin: 0 1px 0 0; }
.tray time { margin: 0 5px 0 10px; width: 32px; }
.peek { width: 13px; height: 100%; border: 1px solid #6d8fb0; background: linear-gradient(#2c5482, #1c4070); }

.excel { position: absolute; left: calc(50% + 3px); right: 11px; top: 11px; bottom: 127px; padding: 0 7px 6px; display: flex; flex-direction: column; border: 1px solid #1c2830; border-radius: 7px; box-shadow: inset 0 0 0 1px rgba(210, 232, 238, 0.65); font: 12px/16px "Noto Sans", "Noto Sans CJK SC", sans-serif; color: #15428b;
  background: radial-gradient(60px 14px at 410px 6px, rgba(60, 90, 150, 0.55), transparent) no-repeat, radial-gradient(70px 12px at 540px 26px, rgba(40, 70, 100, 0.6), transparent) 0 0 / 100% 30px no-repeat, linear-gradient(90deg, #8fc3c8, #a3c9da 30%, #8fb5d0 60%, #9ccbd0) 0 0 / 100% 30px no-repeat, linear-gradient(#9cc4cc, #777 24%, #999 27%, #111 28%, #0a0a0c) 0 0 / 7px 100% no-repeat, linear-gradient(#a8d4d4, #b9a9b4 20%, #56708c 27%, #7a5a68 36%, #3a5060 50%, #101820 65%, #a84a58 72%, #8c3c4c 86%, #1c2c34 90%) 100% 0 / 7px 100% no-repeat, #0a0a0c; }
.titlebar { display: flex; height: 28px; flex: none; align-items: center; color: #111; }
.quick { display: flex; align-items: center; gap: 7px; height: 22px; margin-left: 40px; padding: 0 8px 0 10px; border: 1px solid #7e9fb4; border-left: 0; border-radius: 0 11px 11px 0; background: rgba(200, 225, 240, 0.4); }
.quick button { display: flex; align-items: center; gap: 4px; }
.car { display: inline-block; flex: none; width: 0; height: 0; border: 3px solid transparent; border-top: 3px solid #5b7dad; border-bottom: 0; }
.car.pale { border-top-color: #9db3c4; }
.more { margin-left: 10px; }
.car.black { border-width: 4px 4px 0; border-top-color: #000; }
.titlebar h1 { flex: 1; margin: 0 0 0 40px; font-size: 12px; font-weight: 400; white-space: nowrap; text-shadow: 0 0 6px #fff, 0 0 6px #e8f8ff; }
.winbtns { display: flex; align-self: flex-start; height: 18px; margin-right: -1px; border: 1px solid #3e4c58; border-top: 0; border-radius: 0 0 5px 5px; overflow: hidden; }
.winbtns button { width: 27px; display: grid; place-items: center; border-right: 1px solid #4d5a66; background: linear-gradient(#d4dde2, #9eabb4 50%, #76858f 52%, #a9b9c2); }
.winbtns .close { width: 47px; border: 0; background: linear-gradient(#e2a492, #cc5a40 48%, #ad2a10 52%, #d66a48); }
.office { position: absolute; left: 8px; top: 6px; z-index: 2; }
.client { flex: 1; min-height: 0; display: flex; flex-direction: column; background: #bfdbff; border: 1px solid #2e4a6c; margin: 0 -1px; }

.tabrow { display: flex; align-items: flex-end; gap: 5px; height: 27px; flex: none; padding-left: 46px; }
.rtab { height: 25px; padding: 0 12px; line-height: 22px; }
.rtab.on { background: linear-gradient(#fbfdff, #dfeaf7); border: 1px solid #8fb2e0; border-bottom: 0; border-radius: 4px 4px 0 0; padding: 0 11px 2px; line-height: 21px; }
.mdi { display: flex; align-items: center; gap: 13px; margin: 0 5px 7px auto; }
.ribbon { display: flex; gap: 3px; flex: none; height: 107px; margin: 0 1px; padding: 2px 13px 4px 0; border: 1px solid #8db2e3; border-radius: 4px; background: linear-gradient(#dce8f6, #c7d9ef 20%, #d8e7f8 80%, #e6fbff); }
.rg { display: flex; flex-direction: column; min-width: 0; border: 1px solid #a6bfe0; border-radius: 3px; background: linear-gradient(#dfe9f5, #d0dff0 18%, #c9dbf0 20%, #dcebfb); box-shadow: 1px 1px #f2f8ff; }
.clip { flex: 0 1 73px; } .font { flex: 0 1 151px; } .align { flex: 0 1 112px; } .num { flex: 0 1 88px; } .style { flex: 0 1 42px; } .cell { flex: 0 1 68px; } .edit { flex: 0 1 124px; }
.body { flex: 1; display: flex; padding: 4px 3px 0; }
.cap { position: relative; height: 19px; line-height: 20px; text-align: center; background: #c1d8f1; color: #3e6aaa; padding-right: 18px; }
.cell .cap, .edit .cap { padding-right: 0; }
.cap svg { position: absolute; right: 4px; top: 4px; }
.big { display: flex; flex-direction: column; align-items: center; width: 42px; line-height: 17px; white-space: nowrap; }
.big span { display: flex; align-items: center; gap: 3px; }
.clip .big span { margin: 2px 0 6px; }
.edit .big svg { margin-bottom: 4px; }
.stack { display: flex; flex-direction: column; gap: 6px; padding: 0 0 0 6px; }
.rows { flex-direction: column; gap: 4px; padding: 2px 2px 0; }
.rows.even { gap: 5px; padding: 3px 3px 0; }
.line { display: flex; gap: 4px; height: 20px; }
.line.tall { height: 25px; gap: 0; }
.combo { display: flex; align-items: center; background: #eaf2fb; border: 1px solid #b4cbe8; padding-right: 4px; color: #000; }
.combo select { flex: 1; min-width: 0; height: 100%; padding-left: 2px; }
.wide { flex: 97; } .size { flex: 47; } .full { flex: 1; }
.btns { display: flex; border: 1px solid #94aed4; border-radius: 3px; background: linear-gradient(#dfe9f5, #c6d8ee 50%, #d5e4f5); }
.btns button { min-width: 22px; display: flex; align-items: center; justify-content: center; border-right: 1px solid #b5c9e4; }
.btns button:last-child { border-right: 0; }
.btns .thin { min-width: 11px; }
.btns .drop { gap: 4px; padding: 0 2px 0 3px; }
.btns .tight { gap: 1px; }
.btns.full button { flex: 1; }
.btns .hot, .views .hot { background: linear-gradient(#fbe0a8, #fdb44e 45%, #fda02c 55%, #ffe08c); }
.btns.gold { border-color: #c08c3c; background: linear-gradient(90deg, #f4f4ee 66%, #fdb44e 68%); }
.serif { font: 15px/18px "Liberation Serif", serif; color: #111; }
.ital { font-style: italic; }
.grow { font-weight: bold; font-size: 17px; color: #333; }
.shrink { font-weight: bold; font-size: 13px; color: #333; }
.serif sup { font: 8px/8px "DejaVu Sans", sans-serif; color: #2c5a9e; align-self: flex-start; }
.wen { display: flex; flex-direction: column; align-items: center; color: #2458b4; font-size: 10px; line-height: 10px; }
.wen small { font: bold 8px/8px "Liberation Sans", sans-serif; color: #222; }
.bare { padding: 0 3px; }
.glyph { color: #111; font-size: 13px; }
.btns .dec { flex-direction: column; color: #222; font: bold 9px/9px "Liberation Sans", sans-serif; }
.style { align-items: center; background: linear-gradient(#d6e5f7, #cfe1f6 60%, #e8f6ff); line-height: 16px; justify-content: flex-start; }
.tile { margin: 3px 0 6px; width: 31px; height: 30px; display: grid; place-items: center; border: 1px solid #b4cbe8; border-radius: 3px; background: #e4effa; }
.style .car { margin-top: 8px; }
.list { display: flex; flex-direction: column; gap: 5px; padding: 2px 3px 0 4px; }
.list button { display: flex; align-items: center; gap: 3px; height: 17px; white-space: nowrap; }
.list .car { margin-left: 3px; }
.edit .list { padding: 0 5px 0 3px; }
.edit .body { padding-top: 2px; }
.sigma { width: 15px; font: bold 16px/16px "Liberation Serif", serif; color: #111; }

.warnrow { display: flex; flex: none; height: 42px; padding: 4px 0 4px 1px; background: #c5daf8; }
.warn { flex: 1; display: flex; align-items: center; padding-left: 3px; border: 1px solid #9fbade; background: linear-gradient(#fff, #e2f1fd); white-space: nowrap; }
.warn strong { margin: 0 12px 0 11px; }
.warn button { width: 70px; height: 21px; margin-left: 10px; border: 1px solid #9fbade; background: #f8fcff; }
.x { margin: 4px 4px 0 7px; }
.formula { display: flex; align-items: center; flex: none; height: 22px; background: #fff; border-top: 1px solid #6f94c4; border-bottom: 1px solid #6f94c4; color: #000; font: 14px/20px "Liberation Mono", "Noto Sans CJK SC", monospace; }
.formula .ref { width: 137px; text-align: center; margin-right: 7px; }
.fx { display: flex; align-items: center; justify-content: space-between; width: 76px; height: 100%; margin-left: 6px; padding: 0 6px 0 4px; border-right: 1px solid #7296c8; border-radius: 10px 0 0 10px; background: linear-gradient(#e8eff9, #9fbde6); box-shadow: inset 1px 0 #7296c8; }
.knob { width: 9px; height: 9px; border-radius: 50%; background: radial-gradient(#fff, #b8c4d4); }
.fx span { font: italic bold 16px/18px "Liberation Serif", serif; color: #555; }
.fx small { font-size: 11px; }
.fin { flex: 1; min-width: 0; padding-left: 12px; }
.formula button { width: 15px; height: 100%; display: grid; place-items: center; background: linear-gradient(#f2f7fd, #b4cceb); border: 1px solid #7296c8; }

.sheet { flex: 1; min-height: 0; display: flex; border-top: 2px solid #e6f0fc; }
.cells { position: relative; flex: 1; min-width: 0; overflow: hidden; background: #fff; }
table { border-collapse: separate; border-spacing: 0; table-layout: fixed; width: 699px; font: 12px/15px "Liberation Mono", monospace; color: #2b3d50; border-top: 1px solid #8ca9d4; }
th, td { padding: 0; height: 16px; border-right: 1px solid #c9d4e3; border-bottom: 1px solid #c9d4e3; font-weight: 400; }
th { background: #e3ecf7; border-color: #94aed0; text-align: center; }
thead th { height: 16px; line-height: 15px; background: linear-gradient(#f8fafd, #d5dde9); }
thead .corner { width: 28px; background: linear-gradient(135deg, #b0c8ee 60%, #e6effb 62%); }
.sel { background: #fcc878; border-color: #e09c40; }
.picture { position: absolute; left: 28px; right: 0; top: 130px; height: 139px; padding-top: 24px; background: #edf1f8; overflow: hidden; }
.box { width: 612px; height: 61px; padding-top: 25px; background: #c8eccb; }
.box span { display: inline-block; height: 36px; margin-left: -11px; font: 23px/39px "Liberation Mono", monospace; color: #eaf4ff; background: #3399ff; white-space: nowrap; vertical-align: top; }
.scroll { width: 16px; flex: none; display: flex; flex-direction: column; background: #7b9bc8; border-left: 1px solid #6484b4; }
.split { height: 9px; background: #f2f6fc; border: 2px solid #9ab4dc; }
.thumb { flex: 0 0 66%; display: grid; place-items: center; border: 1px solid #6078a0; border-radius: 2px; background: linear-gradient(90deg, #fff, #c9d5e6); }
.thumb i { width: 7px; height: 8px; background: repeating-linear-gradient(#7b889c 0 1px, transparent 1px 2px); }
.end { margin-top: auto; }
.sheettabs { display: flex; flex: none; height: 17px; background: #7b9bc8; border-top: 1px solid #7296c8; border-bottom: 1px solid #5f82b8; padding-right: 16px; }
.nav { width: 62px; background: #d5e4f8; border-right: 1px solid #8fabd6; overflow: hidden; }
.stab { position: relative; flex: none; width: 79px; padding-left: 11px; text-align: left; font: 12px/16px "Liberation Mono", "Noto Sans CJK SC", monospace; color: #15428b; background: #cfe0fa; white-space: nowrap; }
.stab.on { background: #cfe0fa linear-gradient(#fff, #fff) 0 0 / 67px 100% no-repeat; }
.stab.first { width: 43px; padding-left: 7px; font-size: 14px; border-right: 1px solid #8fabd6; }
.stab span { position: relative; }
.stab svg { position: absolute; right: 0; top: 0; }
.strip { display: flex; flex: 302; min-width: 0; overflow: hidden; background: #cfe0fa; }
.vsplit { width: 6px; border: 1px solid #9ab4dc; background: #f4f8fd; }
.hscroll { flex: 254; display: flex; }
.hthumb { flex: 0 0 127px; margin-left: 41px; display: grid; place-items: center; border: 1px solid #6078a0; border-radius: 2px; background: linear-gradient(#fff, #cbd4e0); }
.hthumb i { width: 8px; height: 7px; background: repeating-linear-gradient(90deg, #7b889c 0 1px, transparent 1px 2px); }
.hscroll .end { margin: 0 0 0 auto; }
.bottom { display: flex; justify-content: space-between; align-items: stretch; flex: none; height: 21px; background: linear-gradient(#dbe8fa, #b6d1f6 45%, #a8c8f3 50%, #cfe2fb); line-height: 20px; }
.ready { width: 40px; padding-left: 6px; border-right: 1px solid #8fb0de; }
.right { display: flex; align-items: center; padding: 0 1px 0 5px; border-left: 1px solid #fff; background: linear-gradient(#b9d0f2, #86aade 50%, #a2c0ec); }
.views { display: flex; border: 1px solid #8ba8d4; border-radius: 2px; background: #cfdcee; height: 18px; margin-right: 9px; }
.views button { width: 18px; display: grid; place-items: center; border-right: 1px solid #9ab4dc; }
.right output { width: 33px; }
.round { width: 16px; height: 16px; border: 1px solid #5678ac; border-radius: 50%; background: linear-gradient(#fff, #d6e2f3); font: bold 16px/12px "Liberation Sans", sans-serif; color: #44546c; }
.right input { appearance: none; width: 102px; height: 16px; background: linear-gradient(#5678ac, #5678ac) 0 8px / 100% 1px no-repeat; }
.right input::-webkit-slider-thumb { appearance: none; width: 9px; height: 13px; background: #eaf1fb; border: 1px solid #4c6ca0; border-radius: 1px 1px 5px 5px; }
.right > svg { margin: 6px 0 0 8px; }
</style>
